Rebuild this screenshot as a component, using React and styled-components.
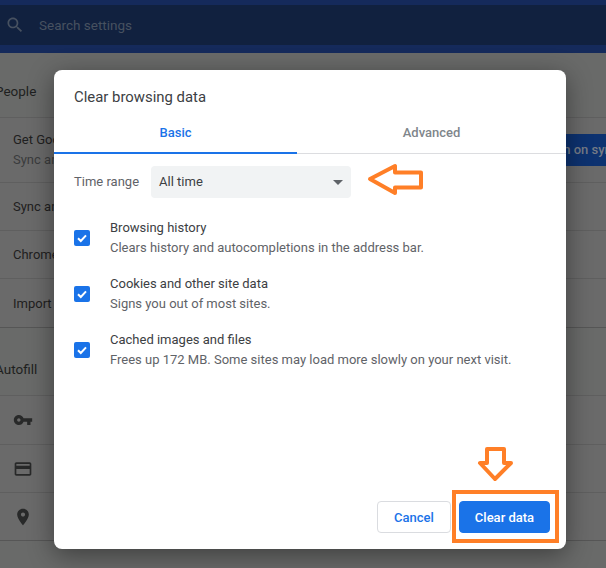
import React from 'react';
import styled, { createGlobalStyle } from 'styled-components';

const Global = createGlobalStyle`
  html, body { margin: 0; padding: 0; background: #696a69; }
  body { font-family: Roboto, "Liberation Sans", sans-serif; }
`;
const Page = styled.div`
  position: relative; width: 606px; height: 568px; overflow: hidden;
  background: #696a69; display: flex; flex-direction: column;
`;
const Header = styled.header`
  height: 53px; box-sizing: border-box; padding: 5px 0 8px; background: #152a5b; flex: none;
`;
const SearchBar = styled.div`
  height: 40px; background: #11213f; display: flex; align-items: center; padding-left: 5px; gap: 14px;
  color: #475160; font-size: 13.5px;
  svg { width: 20px; height: 20px; fill: #475160; }
`;
const Content = styled.main`
  width: 720px; margin-left: -3px; display: flex; flex-direction: column;
`;
const Heading = styled.h2`
  margin: 0 0 0 -2px; font-weight: 400; font-size: 13.5px; color: #1e1f20; display: flex; align-items: center;
  height: ${p => p.$h}px; padding-top: ${p => p.$top}px; box-sizing: border-box; flex: none;
`;
const Card = styled.section`
  background: #6a6a6a; display: flex; flex-direction: column;
  border-top: 1px solid #5f5f5f;
  border-bottom: 1px solid #565656;
`;
const Row = styled.div`
  height: ${p => p.$h}px; box-sizing: border-box; padding: ${p => p.$pt || 0}px 0 0 16px; display: flex; flex-direction: column;
  justify-content: center; font-size: 13px; line-height: 20px; color: #1f2020; position: relative;
  & + & { border-top: 1px solid #5f5f5f; }
`;
const RowLabel = styled.span`
  width: 60px; overflow: hidden; white-space: nowrap;
  color: ${p => p.$secondary ? '#3a3c3d' : '#1f2020'};
`;
const IconRow = styled(Row)`
  svg { width: 20px; height: 20px; fill: #282929; }
`;
const SyncButton = styled.div`
  position: absolute; left: 533px; top: 16px; width: 140px; height: 32px; background: #0d3270;
  color: #757b86; font-size: 13px; font-weight: 500; display: flex; align-items: center; padding-left: 14px;
  box-sizing: border-box; white-space: nowrap;
`;
const Dialog = styled.div`
  position: absolute; left: 54px; top: 70px; width: 512px; height: 479px; background: #fff; border-radius: 8px;
  box-shadow: 0 6px 26px rgba(0,0,0,.42); display: flex; flex-direction: column;
`;
const Title = styled.h1`
  margin: 0; padding: 18px 20px 0; height: 46px; box-sizing: border-box;
  font-size: 14.9px; line-height: 18px; font-weight: 400; color: #3c4043;
`;
const Tabs = styled.div`
  display: flex; height: 38px; box-sizing: border-box; border-bottom: 1px solid #dcdde0; flex: none;
`;
const Tab = styled.div`
  width: ${p => p.$w}px; height: 38px; box-sizing: border-box; padding-bottom: 3px; display: flex; align-items: center; justify-content: center;
  font-size: 13px; font-weight: 500; color: ${p => p.$active ? '#1a73e8' : '#80868b'};
  border-bottom: 2px solid ${p => p.$active ? '#1a73e8' : 'transparent'};
`;
const Body = styled.div`padding: 12px 20px 0; display: flex; flex-direction: column; flex: 1;`;
const RangeRow = styled.div`display: flex; align-items: center; gap: 12px; margin-bottom: 20px;`;
const RangeLabel = styled.span`font-size: 13px; color: #5f6368; margin-bottom: 2px;`;
const Select = styled.div`
  width: 200px; height: 32px; box-sizing: border-box; background: #f1f3f4; border-radius: 4px; padding: 0 8px 2px;
  display: flex; align-items: center; justify-content: space-between; font-size: 13px; color: #3c4043;
`;
const Caret = styled.span`
  width: 0; height: 0; border-left: 5px solid transparent; border-right: 5px solid transparent;
  border-top: 5px solid #5f6368; margin-top: 2px;
`;
const Option = styled.div`
  display: flex; align-items: center; gap: 20px; height: 40px; margin-bottom: 16px;
`;
const Check = styled.span`
  width: 16px; height: 16px; border-radius: 2px; background: #1a73e8; flex: none; display: flex; align-items: center; justify-content: center;
  svg { width: 12px; height: 12px; fill: none; stroke: #fff; stroke-width: 2; }
`;
const OptionText = styled.div`display: flex; flex-direction: column;`;
const OptionTitle = styled.span`font-size: 13px; line-height: 20px; color: #3c4043;`;
const OptionDesc = styled.span`font-size: 13px; line-height: 20px; color: #5f6368;`;
const Footer = styled.div`
  margin-top: auto; display: flex; justify-content: flex-end; gap: 8px; padding: 0 16px 16px;
`;
const Button = styled.button`
  height: 32px; width: ${p => p.$w}px; box-sizing: border-box; border-radius: 4px; font: 500 13px Roboto, sans-serif;
  background: ${p => p.$primary ? '#1a73e8' : '#fff'}; color: ${p => p.$primary ? '#fff' : '#1a73e8'};
  border: 1px solid ${p => p.$primary ? '#1a73e8' : '#dadce0'}; padding: 0;
`;
const Overlay = styled.svg`
  position: absolute; left: 0; top: 0; width: 606px; height: 568px; pointer-events: none;
`;

const Icon = ({ d }) => <svg viewBox="0 0 24 24"><path d={d} /></svg>;

const options = [
  ['Browsing history', 'Clears history and autocompletions in the address bar.'],
  ['Cookies and other site data', 'Signs you out of most sites.'],
  ['Cached images and files', 'Frees up 172 MB. Some sites may load more slowly on your next visit.'],
];

export default function App() {
  return (
    <Page>
      <Global />
      <Header>
        <SearchBar>
          <Icon d="M15.5 14h-.79l-.28-.27C15.41 12.59 16 11.11 16 9.5 16 5.91 13.09 3 9.5 3S3 5.91 3 9.5 5.91 16 9.5 16c1.61 0 3.09-.59 4.23-1.57l.27.28v.79l5 4.99L20.49 19l-4.99-5zm-6 0C7.01 14 5 11.99 5 9.5S7.01 5 9.5 5 14 7.01 14 9.5 11.99 14 9.5 14z" />
          Search settings
        </SearchBar>
      </Header>
      <Content>
        <Heading $h={64} $top={12}>People</Heading>
        <Card>
          <Row $h={64}>
            <RowLabel>Get Google smarts in Chrome</RowLabel>
            <RowLabel $secondary>Sync and personalize Chrome</RowLabel>
            <SyncButton>Turn on sync</SyncButton>
          </Row>
          <Row $h={48}><RowLabel>Sync and Google services</RowLabel></Row>
          <Row $h={48}><RowLabel>Chrome name and picture</RowLabel></Row>
          <Row $h={49} $pt={2}><RowLabel>Import bookmarks and settings</RowLabel></Row>
        </Card>
        <Heading $h={67} $top={14}>Autofill</Heading>
        <Card>
          <IconRow $h={48}><Icon d="M12.65 10C11.83 7.67 9.61 6 7 6c-3.31 0-6 2.69-6 6s2.69 6 6 6c2.61 0 4.83-1.67 5.65-4H17v4h4v-4h2v-4H12.65zM7 14c-1.1 0-2-.9-2-2s.9-2 2-2 2 .9 2 2-.9 2-2 2z" /></IconRow>
          <IconRow $h={48}><Icon d="M20 4H4c-1.11 0-1.99.89-1.99 2L2 18c0 1.11.89 2 2 2h16c1.11 0 2-.89 2-2V6c0-1.11-.89-2-2-2zm0 14H4v-6h16v6zm0-10H4V6h16v2z" /></IconRow>
          <IconRow $h={48}><Icon d="M12 2C8.13 2 5 5.13 5 9c0 5.25 7 13 7 13s7-7.75 7-13c0-3.87-3.13-7-7-7zm0 9.5c-1.38 0-2.5-1.12-2.5-2.5s1.12-2.5 2.5-2.5 2.5 1.12 2.5 2.5-1.12 2.5-2.5 2.5z" /></IconRow>
        </Card>
      </Content>
      <Dialog>
        <Title>Clear browsing data</Title>
        <Tabs>
          <Tab $w={243} $active>Basic</Tab>
          <Tab $w={269}>Advanced</Tab>
        </Tabs>
        <Body>
          <RangeRow>
            <RangeLabel>Time range</RangeLabel>
            <Select>All time<Caret /></Select>
          </RangeRow>
          {options.map(([t, d]) => (
            <Option key={t}>
              <Check><svg viewBox="0 0 12 12"><path d="M2 6.2 4.8 9 10 3.4" /></svg></Check>
              <OptionText>
                <OptionTitle>{t}</OptionTitle>
                <OptionDesc>{d}</OptionDesc>
              </OptionText>
            </Option>
          ))}
        </Body>
        <Footer>
          <Button $w={74}>Cancel</Button>
          <Button $w={91} $primary>Clear data</Button>
        </Footer>
      </Dialog>
      <Overlay viewBox="0 0 606 568">
        <g fill="none" stroke="#ff7f27" strokeWidth="4" strokeLinejoin="round">
          <path d="M370 179 395 166V172.500H421V187.500H395V193Z" />
          <path d="M487 449H504V463H511L495 479 480 463H487Z" />
          <rect x="454" y="492" width="103" height="49" strokeLinejoin="miter" />
        </g>
      </Overlay>
    </Page>
  );
}
